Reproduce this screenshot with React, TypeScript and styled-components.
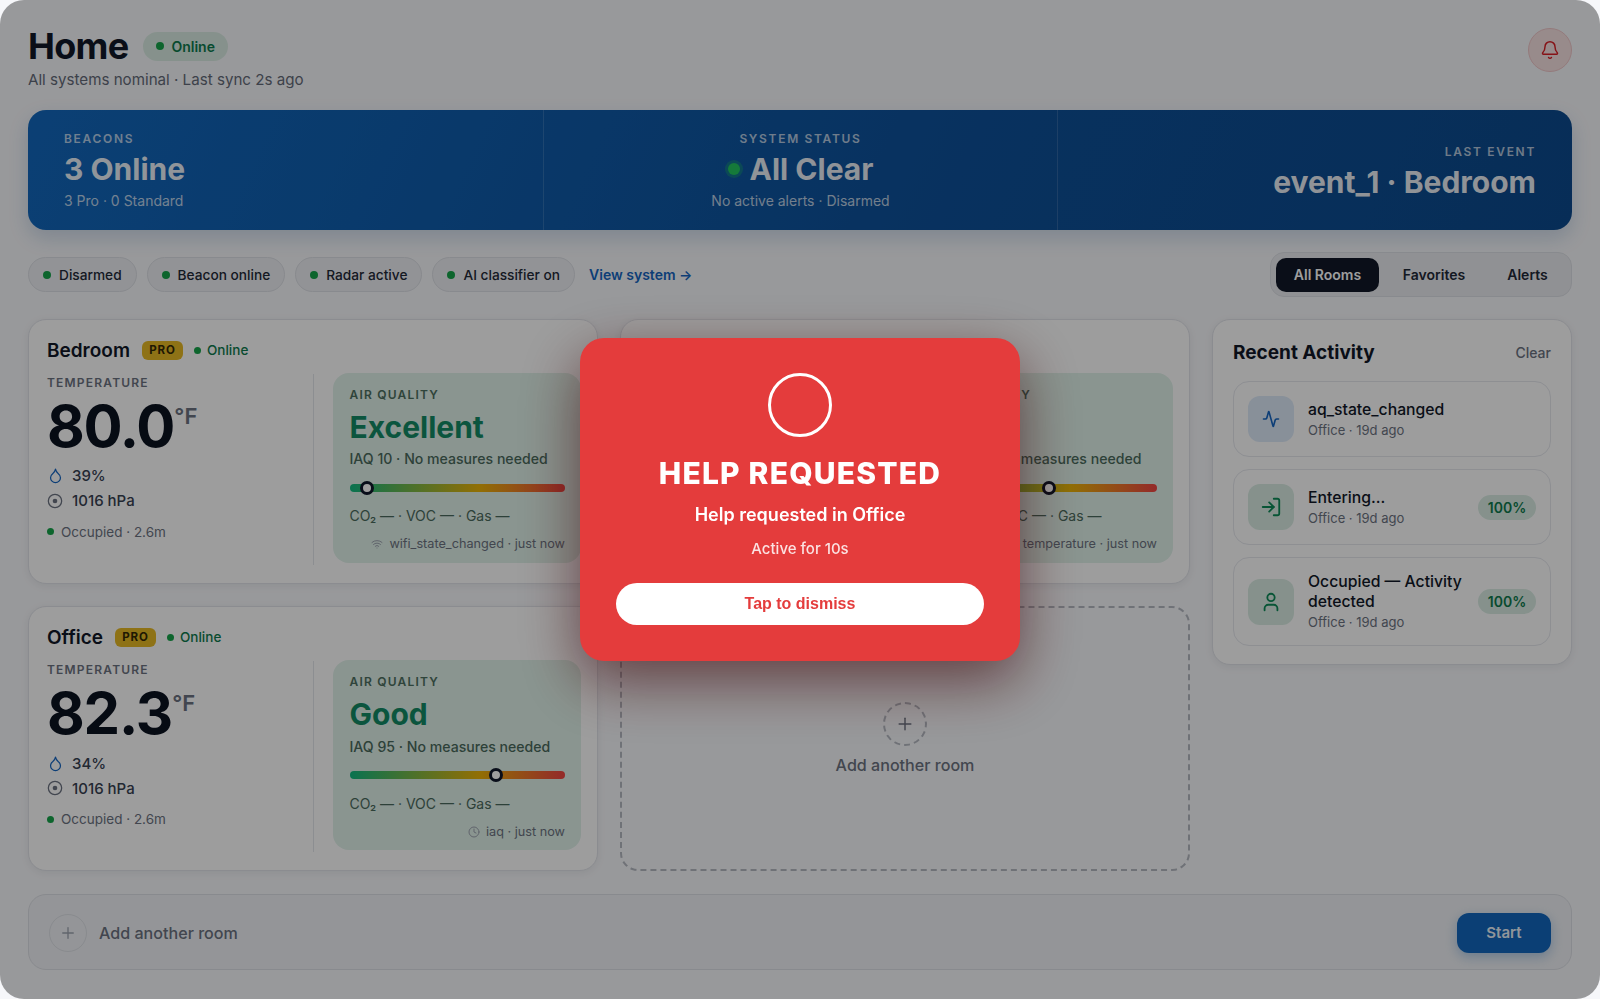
import React from "react";
import styled, { createGlobalStyle } from "styled-components";
import { Activity, Bell, Clock, Droplet, LogIn, Plus, User, Wifi } from "lucide-react";

const Global = createGlobalStyle`
  html, body { margin: 0; padding: 0; background: #eef0f4; }
  * { box-sizing: border-box; }
  body { font-family: Inter, "Liberation Sans", sans-serif; color: #0f172a; }
`;
const Page = styled.div`
  width: 1600px; height: 999px; padding: 28px; background: #f6f7fa; overflow: hidden;
  display: flex; flex-direction: column; gap: 22px;
`;
const Header = styled.header`display: flex; justify-content: space-between; align-items: flex-start; height: 60px;`;
const HeaderLeft = styled.div`display: flex; flex-direction: column;`;
const TitleRow = styled.div`display: flex; align-items: center; gap: 15px; height: 40px; margin-top: -2px;`;
const Title = styled.h1`margin: 0; font-size: 36px; line-height: 40px; font-weight: 700; letter-spacing: -0.02em; color: #111827;`;
const StatusPill = styled.span`
  display: inline-flex; align-items: center; gap: 7px; height: 29px; padding: 0 13px; border-radius: 15px;
  background: #d8ebe2; color: #0e7a4d; font-size: 14px; font-weight: 600;
`;
const Dot = styled.i<{ $size?: number }>`
  display: inline-block; flex: none; width: ${p => p.$size ?? 8}px; height: ${p => p.$size ?? 8}px; border-radius: 50%; background: #16a34a;
`;
const Subtitle = styled.p`margin: 4px 0 0; font-size: 15.15px; line-height: 20px; color: #636a78;`;
const BellButton = styled.button`
  width: 44px; height: 44px; border-radius: 50%; padding: 0; display: flex; align-items: center; justify-content: center;
  background: #f6e0e1; border: 1px solid #eec6c8; color: #d81f26;
`;
const Banner = styled.section`
  height: 120px; display: grid; grid-template-columns: repeat(3, 1fr); border-radius: 18px; color: rgba(255,255,255,.92); flex: none;
  background: linear-gradient(115deg, #1267bc 0%, #0d5099 60%, #0c4a8d 100%);
  box-shadow: 0 8px 20px rgba(13, 80, 150, 0.18);
`;
const BannerCell = styled.div<{ $align: string; $divider?: boolean; $shift?: number }>`
  display: flex; flex-direction: column; justify-content: center; padding: ${p => p.$shift ?? 1}px 36px 0; text-align: ${p => p.$align};
  border-left: ${p => (p.$divider ? "1px solid rgba(255,255,255,.14)" : "none")};
`;
const BannerLabel = styled.div`font-size: 12px; line-height: 16px; font-weight: 600; letter-spacing: 0.14em; color: rgba(255,255,255,.7);`;
const BannerValue = styled.div<{ $justify?: string }>`
  font-size: 30px; line-height: 38px; font-weight: 700; margin-top: 3px; display: flex; align-items: center; gap: 8px;
  justify-content: ${p => p.$justify ?? "flex-start"};
`;
const BannerSub = styled.div`font-size: 14px; line-height: 18px; margin-top: 4px; color: rgba(255,255,255,.72);`;
const GlowDot = styled.i`
  width: 12px; height: 12px; border-radius: 50%; background: #22c55e; box-shadow: 0 0 0 3px rgba(34,197,94,.3); display: block; margin-right: 2px;
`;
const Toolbar = styled.div`display: flex; align-items: center; justify-content: space-between; height: 45px; flex: none;`;
const Chips = styled.div`display: flex; align-items: center; gap: 10px;`;
const Chip = styled.span`
  display: inline-flex; align-items: center; gap: 8px; height: 35px; padding: 0 14px; border-radius: 18px;
  background: #eceef2; border: 1px solid #dcdfe5; font-size: 13.7px; font-weight: 500; color: #1f2937;
`;
const ViewLink = styled.a`font-size: 14px; font-weight: 600; color: #1565c0; margin-left: 4px;`;
const Tabs = styled.div`
  display: flex; align-items: center; height: 45px; width: 302px; padding: 0 5px; border-radius: 14px; background: #e9ebef; border: 1px solid #dcdfe5;
`;
const Tab = styled.button<{ $active?: boolean; $w: number }>`
  width: ${p => p.$w}px; height: 34px; border: none; border-radius: 10px; padding: 0; font-family: Inter, sans-serif; font-size: 14px; font-weight: 600;
  background: ${p => (p.$active ? "#111827" : "transparent")}; color: ${p => (p.$active ? "#fff" : "#1f2937")};
`;
const Main = styled.div`display: grid; grid-template-columns: 1fr 360px; gap: 22px; flex: none;`;
const Rooms = styled.div`display: grid; grid-template-columns: 1fr 1fr; grid-auto-rows: 265px; gap: 22.25px 22px;`;
const RoomCard = styled.article`
  background: #fdfdfe; border: 1px solid #e0e2e8; border-radius: 18px; padding: 14px 16px 0 18px;
  box-shadow: 0 2px 8px rgba(15,23,42,.07);
`;
const RoomHead = styled.div`display: flex; align-items: center; height: 32px; margin-bottom: 8px;`;
const RoomName = styled.h3`margin: 0; font-size: 19px; font-weight: 600; color: #111827;`;
const ProBadge = styled.span`
  margin-left: 12px; width: 41px; height: 19px; display: flex; align-items: center; justify-content: center; border-radius: 6px;
  background: #e6b824; color: #332805; font-size: 11.5px; font-weight: 700; letter-spacing: 0.08em;
`;
const RoomStatus = styled.span`display: inline-flex; align-items: center; gap: 6px; margin-left: 11px; font-size: 13.5px; font-weight: 500; color: #0e7a4d;`;
const RoomBody = styled.div`display: grid; grid-template-columns: 267px 1fr; gap: 19px;`;
const LeftCol = styled.div`height: 191px; padding-top: 1px; border-right: 1px solid #e3e5ea;`;
const MicroLabel = styled.div`font-size: 12px; line-height: 16px; font-weight: 600; letter-spacing: 0.1em; color: #6b7280;`;
const TempRow = styled.div`display: flex; align-items: flex-start; margin-top: 5px; height: 60px;`;
const TempValue = styled.span`font-size: 58px; line-height: 60px; font-weight: 700; letter-spacing: -0.02em; color: #0b1220;`;
const TempUnit = styled.span`font-size: 22px; line-height: 26px; font-weight: 600; color: #6b7280; margin: 7px 0 0 0;`;
const Metric = styled.div`display: flex; align-items: center; gap: 9px; height: 25px; font-size: 15px; font-weight: 500; color: #374151;`;
const MetricList = styled.div`margin-top: 7.3px;`;
const DropIcon = styled(Droplet)`color: #1565c0; flex: none; margin-right: -1px;`;
const PressureIcon = styled.svg`color: #6b7280; flex: none;`;
const Occupancy = styled.div`display: flex; align-items: center; gap: 7px; height: 20px; margin-top: 8.7px; font-size: 13.5px; color: #6b7280;`;
const AirPanel = styled.div`
  height: 190px; margin-top: -1px; padding: 14px 16px 0 16.5px; border-radius: 16px; background: #dff0e8; color: #4b6b5e;
`;
const AirLabel = styled(MicroLabel)`color: #4d6f60;`;
const AirGrade = styled.div`font-size: 30px; line-height: 38px; font-weight: 700; margin-top: 5px; color: #138a64;`;
const AirLine = styled.div`font-size: 14.1px; line-height: 20px; font-weight: 500; margin-top: 3.3px; color: #4a6a5c;`;
const Track = styled.div`
  position: relative; height: 8px; border-radius: 4px; margin-top: 14.7px;
  background: linear-gradient(90deg, #10b981 0%, #eab308 60%, #ef4444 100%);
`;
const Thumb = styled.i`
  position: absolute; top: -3px; width: 14px; height: 14px; margin-left: -7px; border-radius: 50%; background: #fff; border: 3px solid #0f172a;
`;
const AirDetail = styled.div`font-size: 14px; line-height: 20px; margin-top: 14.3px; color: #4a6a5c;`;
const AirFoot = styled.div`
  display: flex; justify-content: flex-end; align-items: center; gap: 6px; font-size: 12.7px; line-height: 16px; margin-top: 10px; color: #6b7280;
`;
const FootIcon = styled.span`display: flex; color: #9ca3af;`;
const AddCard = styled.button`
  display: flex; flex-direction: column; align-items: center; justify-content: center; gap: 9px; padding: 0;
  background: transparent; border: 2px dashed #b4b8c1; border-radius: 18px;
`;
const AddCircle = styled.span`
  width: 44px; height: 44px; border-radius: 50%; border: 2px dashed #b4b8c1; display: flex; align-items: center; justify-content: center; color: #6b7280;
`;
const AddText = styled.span`font-family: Inter, sans-serif; font-size: 16.1px; line-height: 20px; font-weight: 500; color: #6b7280;`;
const Side = styled.aside`
  align-self: start; height: 346px; background: #fdfdfe; border: 1px solid #e0e2e8; border-radius: 18px; padding: 16px 20px 0;
  box-shadow: 0 2px 8px rgba(15,23,42,.07);
`;
const SideHead = styled.div`display: flex; align-items: center; justify-content: space-between; height: 32px; margin-bottom: 13px;`;
const SideTitle = styled.h2`margin: 0; font-size: 19px; font-weight: 700; color: #111827;`;
const ClearLink = styled.span`font-size: 14px; font-weight: 500; color: #6b7280;`;
const Feed = styled.div`display: flex; flex-direction: column; gap: 12px;`;
const FeedItem = styled.div`
  display: flex; align-items: center; gap: 14px; min-height: 76px; padding: 13px 14px; border: 1px solid #e5e7ec; border-radius: 16px; background: #fdfdfe;
`;
const FeedIcon = styled.span<{ $bg: string; $fg: string }>`
  flex: none; width: 46px; height: 46px; border-radius: 12px; display: flex; align-items: center; justify-content: center;
  background: ${p => p.$bg}; color: ${p => p.$fg};
`;
const FeedText = styled.div`flex: 1; min-width: 0; padding-top: 1px;`;
const FeedTitle = styled.div`font-size: 15.75px; line-height: 20px; font-weight: 500; color: #111827;`;
const FeedSub = styled.div`font-size: 13px; line-height: 20px; color: #6b7280;`;
const Confidence = styled.span`
  flex: none; width: 58px; height: 25px; margin-left: -4px; border-radius: 13px; display: flex; align-items: center; justify-content: center;
  background: #d8ebe2; color: #0e7a4d; font-size: 14px; font-weight: 600;
`;
const BottomBar = styled.div`
  height: 76px; margin-top: 0.75px; padding: 1px 20px 0; display: flex; align-items: center; border-radius: 18px; background: #eff1f5; border: 1px solid #dcdfe5; flex: none;
`;
const BarCircle = styled.span`
  width: 38px; height: 38px; border-radius: 50%; border: 1px solid #dde0e6; display: flex; align-items: center; justify-content: center; color: #9ca3af;
`;
const BarText = styled.span`flex: 1; margin-left: 12px; font-size: 16.1px; font-weight: 500; color: #6b7280;`;
const StartButton = styled.button`
  width: 94px; height: 40px; border: none; border-radius: 12px; background: #1267bd; color: rgba(255,255,255,.92); font-family: Inter, sans-serif; font-size: 15px; font-weight: 600;
  box-shadow: 0 4px 12px rgba(18,103,189,.3);
`;
const Overlay = styled.div`
  position: fixed; inset: 0; border-radius: 24px; background: rgba(0,0,0,.38); backdrop-filter: blur(0.7px);
  display: flex; align-items: center; justify-content: center;
`;
const Modal = styled.div`
  width: 440px; height: 323px; padding: 35px 36px 36px; border-radius: 24px; background: #e43c3c; color: #fff; text-align: center;
  display: flex; flex-direction: column; align-items: center;
  box-shadow: 0 20px 60px rgba(60,0,5,.6);
`;
const Ring = styled.div`width: 64px; height: 64px; border-radius: 50%; border: 3px solid #fff; flex: none;`;
const ModalTitle = styled.h2`margin: 16px 0 0; font-size: 30px; line-height: 40px; font-weight: 800; letter-spacing: 0.04em;`;
const ModalSub = styled.div`margin-top: 10px; font-size: 18px; line-height: 24px; font-weight: 600;`;
const ModalTime = styled.div`margin-top: 12px; font-size: 15px; line-height: 20px; font-weight: 500; color: rgba(255,255,255,.85);`;
const Dismiss = styled.button`
  width: 100%; height: 42px; margin-top: auto; border: none; border-radius: 21px; background: #fff; color: #e43c3c;
  font-family: "Liberation Sans", Arial, sans-serif; font-size: 16px; font-weight: 700;
`;

const Pressure = () => (
  <PressureIcon width="16" height="16" viewBox="0 0 24 24" fill="none" stroke="currentColor" strokeWidth="1.9">
    <circle cx="12" cy="12" r="10" />
    <circle cx="12" cy="12" r="3.5" fill="currentColor" stroke="none" />
  </PressureIcon>
);

type Room = { name: string; temp: string; hum: string; grade: string; iaq: number; pos: number; foot: string; icon: "wifi" | "clock" | "none" };
const RoomTile = ({ room }: { room: Room }) => (
  <RoomCard>
    <RoomHead>
      <RoomName>{room.name}</RoomName>
      <ProBadge>PRO</ProBadge>
      <RoomStatus><Dot $size={7} />Online</RoomStatus>
    </RoomHead>
    <RoomBody>
      <LeftCol>
        <MicroLabel>TEMPERATURE</MicroLabel>
        <TempRow><TempValue>{room.temp}</TempValue><TempUnit>°F</TempUnit></TempRow>
        <MetricList>
          <Metric><DropIcon size={17} strokeWidth={1.75} />{room.hum}</Metric>
          <Metric><Pressure />1016 hPa</Metric>
        </MetricList>
        <Occupancy><Dot $size={7} />Occupied · 2.6m</Occupancy>
      </LeftCol>
      <AirPanel>
        <AirLabel>AIR QUALITY</AirLabel>
        <AirGrade>{room.grade}</AirGrade>
        <AirLine>IAQ {room.iaq} · No measures needed</AirLine>
        <Track><Thumb style={{ left: `${room.pos}%` }} /></Track>
        <AirDetail>CO₂ — · VOC — · Gas —</AirDetail>
        <AirFoot>
          {room.icon !== "none" && <FootIcon>{room.icon === "wifi" ? <Wifi size={12} /> : <Clock size={12} />}</FootIcon>}
          {room.foot}
        </AirFoot>
      </AirPanel>
    </RoomBody>
  </RoomCard>
);

export default function App() {
  return (
    <>
      <Global />
      <Page>
        <Header>
          <HeaderLeft>
            <TitleRow><Title>Home</Title><StatusPill><Dot />Online</StatusPill></TitleRow>
            <Subtitle>All systems nominal · Last sync 2s ago</Subtitle>
          </HeaderLeft>
          <BellButton><Bell size={20} strokeWidth={1.75} /></BellButton>
        </Header>
        <Banner>
          <BannerCell $align="left">
            <BannerLabel>BEACONS</BannerLabel>
            <BannerValue>3 Online</BannerValue>
            <BannerSub>3 Pro · 0 Standard</BannerSub>
          </BannerCell>
          <BannerCell $align="center" $divider>
            <BannerLabel>SYSTEM STATUS</BannerLabel>
            <BannerValue $justify="center"><GlowDot />All Clear</BannerValue>
            <BannerSub>No active alerts · Disarmed</BannerSub>
          </BannerCell>
          <BannerCell $align="right" $divider $shift={5}>
            <BannerLabel>LAST EVENT</BannerLabel>
            <BannerValue $justify="flex-end">event_1 · Bedroom</BannerValue>
          </BannerCell>
        </Banner>
        <Toolbar>
          <Chips>
            <Chip><Dot />Disarmed</Chip>
            <Chip><Dot />Beacon online</Chip>
            <Chip><Dot />Radar active</Chip>
            <Chip><Dot />AI classifier on</Chip>
            <ViewLink>View system →</ViewLink>
          </Chips>
          <Tabs>
            <Tab $active $w={103}>All Rooms</Tab>
            <Tab $w={110}>Favorites</Tab>
            <Tab $w={77}>Alerts</Tab>
          </Tabs>
        </Toolbar>
        <Main>
          <Rooms>
            <RoomTile room={{ name: "Bedroom", temp: "80.0", hum: "39%", grade: "Excellent", iaq: 10, pos: 8, foot: "wifi_state_changed · just now", icon: "wifi" }} />
            <RoomTile room={{ name: "Living Room", temp: "81.4", hum: "36%", grade: "Good", iaq: 72, pos: 50, foot: "temperature · just now", icon: "none" }} />
            <RoomTile room={{ name: "Office", temp: "82.3", hum: "34%", grade: "Good", iaq: 95, pos: 68, foot: "iaq · just now", icon: "clock" }} />
            <AddCard><AddCircle><Plus size={20} strokeWidth={1.75} /></AddCircle><AddText>Add another room</AddText></AddCard>
          </Rooms>
          <Side>
            <SideHead><SideTitle>Recent Activity</SideTitle><ClearLink>Clear</ClearLink></SideHead>
            <Feed>
              <FeedItem>
                <FeedIcon $bg="#dbe8f7" $fg="#1565c0"><Activity size={18} strokeWidth={2.2} /></FeedIcon>
                <FeedText><FeedTitle>aq_state_changed</FeedTitle><FeedSub>Office · 19d ago</FeedSub></FeedText>
              </FeedItem>
              <FeedItem>
                <FeedIcon $bg="#d8ebe2" $fg="#0e8a58"><LogIn size={22} strokeWidth={2} /></FeedIcon>
                <FeedText><FeedTitle>Entering...</FeedTitle><FeedSub>Office · 19d ago</FeedSub></FeedText>
                <Confidence>100%</Confidence>
              </FeedItem>
              <FeedItem>
                <FeedIcon $bg="#d8ebe2" $fg="#0e8a58"><User size={22} strokeWidth={2} /></FeedIcon>
                <FeedText><FeedTitle>Occupied — Activity detected</FeedTitle><FeedSub>Office · 19d ago</FeedSub></FeedText>
                <Confidence>100%</Confidence>
              </FeedItem>
            </Feed>
          </Side>
        </Main>
        <BottomBar>
          <BarCircle><Plus size={18} strokeWidth={1.75} /></BarCircle>
          <BarText>Add another room</BarText>
          <StartButton>Start</StartButton>
        </BottomBar>
      </Page>
      <Overlay>
        <Modal>
          <Ring />
          <ModalTitle>HELP REQUESTED</ModalTitle>
          <ModalSub>Help requested in Office</ModalSub>
          <ModalTime>Active for 10s</ModalTime>
          <Dismiss>Tap to dismiss</Dismiss>
        </Modal>
      </Overlay>
    </>
  );
}
